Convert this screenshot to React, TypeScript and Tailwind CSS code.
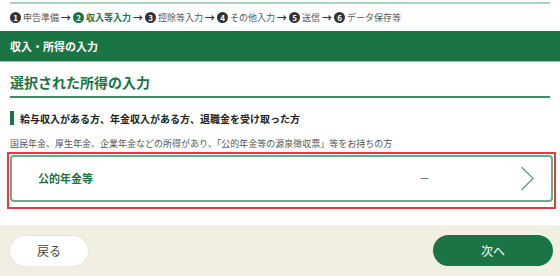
export default function App() {
  const steps = ["申告準備", "収入等入力", "控除等入力", "その他入力", "送信", "データ保存等"];
  return (
    <div className="w-[560px] h-[276px] bg-white overflow-hidden flex flex-col font-['Noto_Sans_CJK_JP','Noto_Sans',sans-serif] text-[#333]">
      <div className="mx-[10px] mt-[2px] border-t-2 border-[#a9d6b9]" />
      <div className="flex items-center h-[27px] px-[10px] text-[9px] leading-none text-[#555]">
        {steps.map((s, i) => (
          <div key={s} className="flex items-center">
            {i > 0 && <span className="mx-[2px] text-[#333] font-bold text-[10px]">→</span>}
            <span
              className={
                "w-[11px] h-[11px] rounded-full text-white text-[8px] font-bold flex items-center justify-center mr-[2px] " +
                (i === 1 ? "bg-[#1b7443]" : "bg-[#333]")
              }
            >
              {i + 1}
            </span>
            <span className={i === 1 ? "text-[#1b7443] font-bold" : ""}>{s}</span>
          </div>
        ))}
      </div>
      <div className="h-[31px] bg-[#1b7443] border-b border-[#8cc7a0] flex items-center px-[10px] text-white text-[11px] font-bold">
        収入・所得の入力
      </div>
      <div className="px-[10px]">
        <h2 className="mt-[10px] pb-[4px] border-b-2 border-[#3d8f5e] text-[#1b7443] text-[14px] font-bold leading-[20px]">
          選択された所得の入力
        </h2>
        <div className="mt-[13px] flex items-center h-[14px]">
          <span className="w-[4px] h-[14px] bg-[#1b7443] mr-[6px]" />
          <span className="text-[10px] font-bold text-[#222]">給与収入がある方、年金収入がある方、退職金を受け取った方</span>
        </div>
        <p className="mt-[12px] text-[9px] text-[#555] leading-[14px]">
          国民年金、厚生年金、企業年金などの所得があり、「公的年金等の源泉徴収票」等をお持ちの方
        </p>
      </div>
      <div className="mx-[7px] mt-[1px] w-[549px] border-2 border-[#e23b41] pt-[1px] pl-[1px] pr-[1px] pb-[5px]">
        <div className="h-[47px] rounded-[4px] border-2 border-[#6aaa84] flex items-center pl-[26px] pr-[16px]">
          <span className="text-[#1b7443] font-bold text-[11px] w-[381px]">公的年金等</span>
          <span className="text-[#555] text-[11px] flex-1">－</span>
          <svg width="15" height="25" viewBox="0 0 15 25" fill="none" stroke="#5aa37a" strokeWidth="1.3">
            <path d="M1.5 1 L13 12.5 L1.5 24" />
          </svg>
        </div>
      </div>
      <div className="mt-[16px] flex-1 bg-[#f1eee3] flex items-center justify-between px-[7px] pr-[7px]">
        <button className="ml-[3px] w-[78px] h-[30px] rounded-full bg-white text-[12px] text-[#444] shadow-[0_0_2px_rgba(0,0,0,0.1)]">
          戻る
        </button>
        <button className="w-[120px] h-[31px] rounded-full bg-[#1b7443] text-white text-[12px]">
          次へ
        </button>
      </div>
    </div>
  );
}
